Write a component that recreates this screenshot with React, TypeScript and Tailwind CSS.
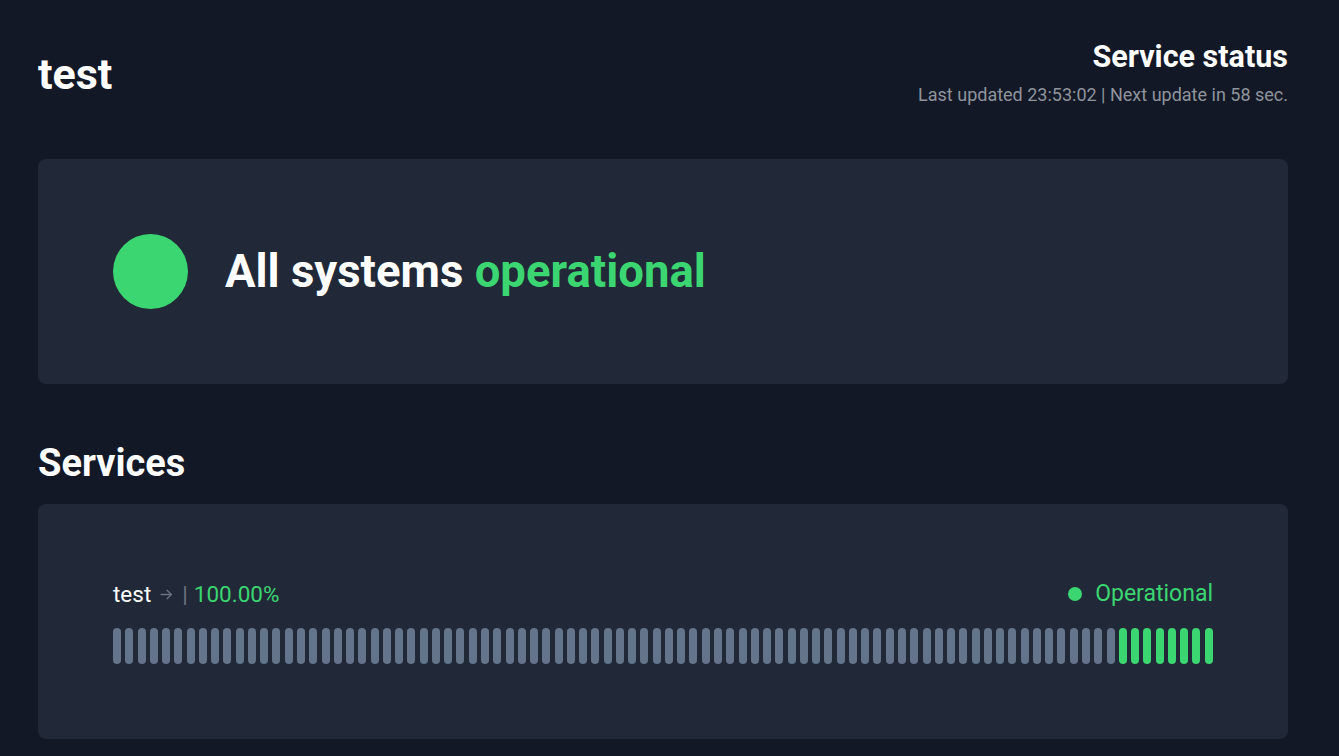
import React from 'react';

// Uptime bars: 90 days, last 8 green
const TOTAL_BARS = 90;
const UP_BARS = 8;

const UptimeBars: React.FC = () => (
  <div className="flex justify-between mt-[19px]">
    {[...Array(TOTAL_BARS)].map((_, i) => (
      <div
        key={i}
        className={`h-[36px] w-[8px] rounded-full ${
          i >= TOTAL_BARS - UP_BARS ? 'bg-[#3bd671]' : 'bg-[#64748b]'
        }`}
      />
    ))}
  </div>
);

const ArrowRight: React.FC = () => (
  <svg width="13" height="13" viewBox="0 0 24 24" fill="none" stroke="currentColor" strokeWidth="2.4" strokeLinecap="round" strokeLinejoin="round">
    <path d="M2 12h19" />
    <path d="M13 4l8 8-8 8" />
  </svg>
);

export default function App() {
  return (
    <div
      className="min-h-screen bg-[#121826] text-white"
      style={{ fontFamily: 'Roboto, "Noto Sans", sans-serif' }}
    >
      <div className="w-[1250px] ml-[38px] pt-[39px] pb-10">
        {/* Header */}
        <div className="flex items-center justify-between">
          <h1 className="text-[43px] font-bold leading-[48px]">test</h1>
          <div className="text-right">
            <div className="text-[30.5px] font-bold leading-[36px]">Service status</div>
            <div className="mt-[7px] text-[18px] leading-[26px] text-[#8f949c]">
              Last updated 23:53:02 | Next update in 58 sec.
            </div>
          </div>
        </div>

        {/* Overall status */}
        <div className="mt-[51px] rounded-lg bg-[#212837] p-[75px] flex items-center gap-[37px]">
          <div className="h-[75px] w-[75px] rounded-full bg-[#3bd671]" />
          <div className="text-[45.5px] font-bold leading-[52px]">
            All systems <span className="text-[#3bd671]">operational</span>
          </div>
        </div>

        {/* Services */}
        <h2 className="mt-[55px] text-[38px] font-bold leading-[48px]">Services</h2>
        <div className="mt-[17px] rounded-lg bg-[#212837] p-[75px]">
          <div className="flex items-center justify-between text-[22.5px] leading-[30px]">
            <div className="flex items-center">
              <span className="text-white">test</span>
              <span className="ml-[9px] text-[#6b7280]">
                <ArrowRight />
              </span>
              <span className="ml-[9px] text-[#6b7280]">|</span>
              <span className="ml-[6px] text-[#3bd671]">100.00%</span>
            </div>
            <div className="flex items-center gap-[13px] text-[#3bd671]">
              <span className="h-[14px] w-[14px] rounded-full bg-[#3bd671]" />
              <span className="text-[23px]">Operational</span>
            </div>
          </div>
          <UptimeBars />
        </div>
      </div>
    </div>
  );
}
